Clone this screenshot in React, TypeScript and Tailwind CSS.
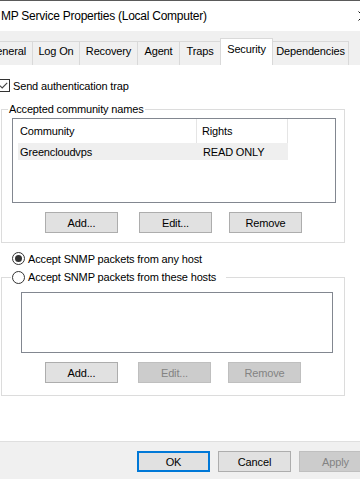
import React from 'react';

const font = "font-['Liberation_Sans',Arial,sans-serif]";

const Button: React.FC<{ label: string; disabled?: boolean; primary?: boolean; className?: string }> = ({
  label,
  disabled,
  primary,
  className = '',
}) => (
  <div
    className={`w-[73px] h-[21px] shrink-0 flex items-center justify-center ${
      disabled
        ? 'bg-[#cccccc] border border-[#bfbfbf] text-[#838383]'
        : primary
        ? 'bg-[#e1e1e1] border-2 border-[#0078d7] text-black'
        : 'bg-[#e1e1e1] border border-[#adadad] text-black'
    } ${className}`}
  >
    {label}
  </div>
);

const Radio: React.FC<{ checked?: boolean }> = ({ checked }) => (
  <svg width="13" height="13" viewBox="0 0 13 13" className="shrink-0">
    <circle cx="6.5" cy="6.5" r="6" fill="#fff" stroke="#333" strokeWidth="1" />
    {checked && <circle cx="6.5" cy="6.5" r="3.5" fill="#333" />}
  </svg>
);

const tabs = [
  { label: 'eneral', w: 'w-[32px] justify-end pr-[6px]' },
  { label: 'Log On', w: 'w-[47px] border-l justify-center' },
  { label: 'Recovery', w: 'w-[58px] border-l justify-center' },
  { label: 'Agent', w: 'w-[42px] border-l justify-center' },
  { label: 'Traps', w: 'w-[41px] border-l justify-center' },
];

export default function App() {
  return (
    <div className={`w-[360px] h-[479px] overflow-hidden bg-white flex flex-col text-[11px] tracking-[-0.15px] leading-[14px] text-black ${font}`}>
      {/* Title bar */}
      <div className="h-[31px] shrink-0 border-t border-[#5a5a5a] flex items-center justify-between overflow-hidden">
        <span className="pl-[1px] text-[12px] tracking-[-0.25px] whitespace-nowrap">MP Service Properties (Local Computer)</span>
        <svg width="10" height="10" viewBox="0 0 10 10" className="mr-[-8px] shrink-0">
          <path d="M0.5 0.5 L9.5 9.5 M9.5 0.5 L0.5 9.5" stroke="#111" strokeWidth="1" />
        </svg>
      </div>

      {/* Tab strip */}
      <div className="h-[34px] shrink-0 bg-[#f0f0f0] flex items-end">
        {tabs.map((t) => (
          <div
            key={t.label}
            className={`h-[24px] shrink-0 border-t border-[#d9d9d9] bg-[#f0f0f0] flex items-center pb-[5px] whitespace-nowrap ${t.w}`}
          >
            {t.label}
          </div>
        ))}
        <div className="h-[27px] w-[53px] shrink-0 bg-white border-t border-l border-r border-[#d9d9d9] flex items-center justify-center pb-[7px]">
          Security
        </div>
        <div className="h-[24px] w-[76px] shrink-0 border-t border-r border-[#d9d9d9] flex items-center justify-center pb-[5px] whitespace-nowrap">
          Dependencies
        </div>
      </div>

      {/* Tab page */}
      <div className="flex-1 flex flex-col">
        <div className="mt-[14px] h-[13px] flex items-center gap-[3px]">
          <svg width="13" height="13" viewBox="0 0 13 13" className="ml-[-3px] shrink-0">
            <rect x="0.5" y="0.5" width="12" height="12" fill="#fff" stroke="#333" />
            <path d="M2.8 6.6 L5.2 9 L10.2 3.8" fill="none" stroke="#444" strokeWidth="1.1" />
          </svg>
          <span>Send authentication trap</span>
        </div>

        {/* Community group */}
        <div className="relative mt-[17px] ml-[1px] w-[344px] h-[134px] border border-[#dcdcdc] flex flex-col">
          <span className="absolute left-[6px] top-[-8px] px-[1px] bg-white">Accepted community names</span>
          <div className="mt-[8px] ml-[10px] w-[324px] h-[85px] border border-[#828790] pl-[5px]">
            <div className="flex h-[24px]">
              <div className="w-[179px] border-r border-[#e5e5e5] pl-[2px] flex items-center">Community</div>
              <div className="w-[91px] border-r border-[#e5e5e5] pl-[5px] flex items-center">Rights</div>
            </div>
            <div className="flex h-[17px] w-[270px] bg-[#efefef] items-center">
              <div className="w-[179px] pl-[2px]">Greencloudvps</div>
              <div className="pl-[6px]">READ ONLY</div>
            </div>
          </div>
          <div className="mt-[9px] flex">
            <Button label="Add..." className="ml-[43px]" />
            <Button label="Edit..." className="ml-[21px]" />
            <Button label="Remove" className="ml-[17px]" />
          </div>
        </div>

        <div className="mt-[9px] ml-[12px] h-[13px] flex items-center gap-[3px]">
          <Radio checked />
          <span>Accept SNMP packets from any host</span>
        </div>

        {/* Hosts group */}
        <div className="relative mt-[12px] ml-[1px] w-[344px] h-[119px] border border-[#dcdcdc] flex flex-col">
          <div className="absolute left-[9px] top-[-8px] h-[14px] pl-[1px] pr-[10px] bg-white flex items-center gap-[3px]">
            <Radio />
            <span>Accept SNMP packets from these hosts</span>
          </div>
          <div className="mt-[14px] ml-[19px] w-[312px] h-[61px] border border-[#828790]" />
          <div className="mt-[9px] flex">
            <Button label="Add..." className="ml-[43px]" />
            <Button label="Edit..." disabled className="ml-[20px]" />
            <Button label="Remove" disabled className="ml-[17px]" />
          </div>
        </div>
      </div>

      {/* Dialog buttons */}
      <div className="h-[38px] shrink-0 border-t border-[#dfdfdf] bg-[#f0f0f0] flex pt-[9px]">
        <Button label="OK" primary className="ml-[137px]" />
        <Button label="Cancel" className="ml-[8px]" />
        <Button label="Apply" disabled className="ml-[8px]" />
      </div>
    </div>
  );
}
